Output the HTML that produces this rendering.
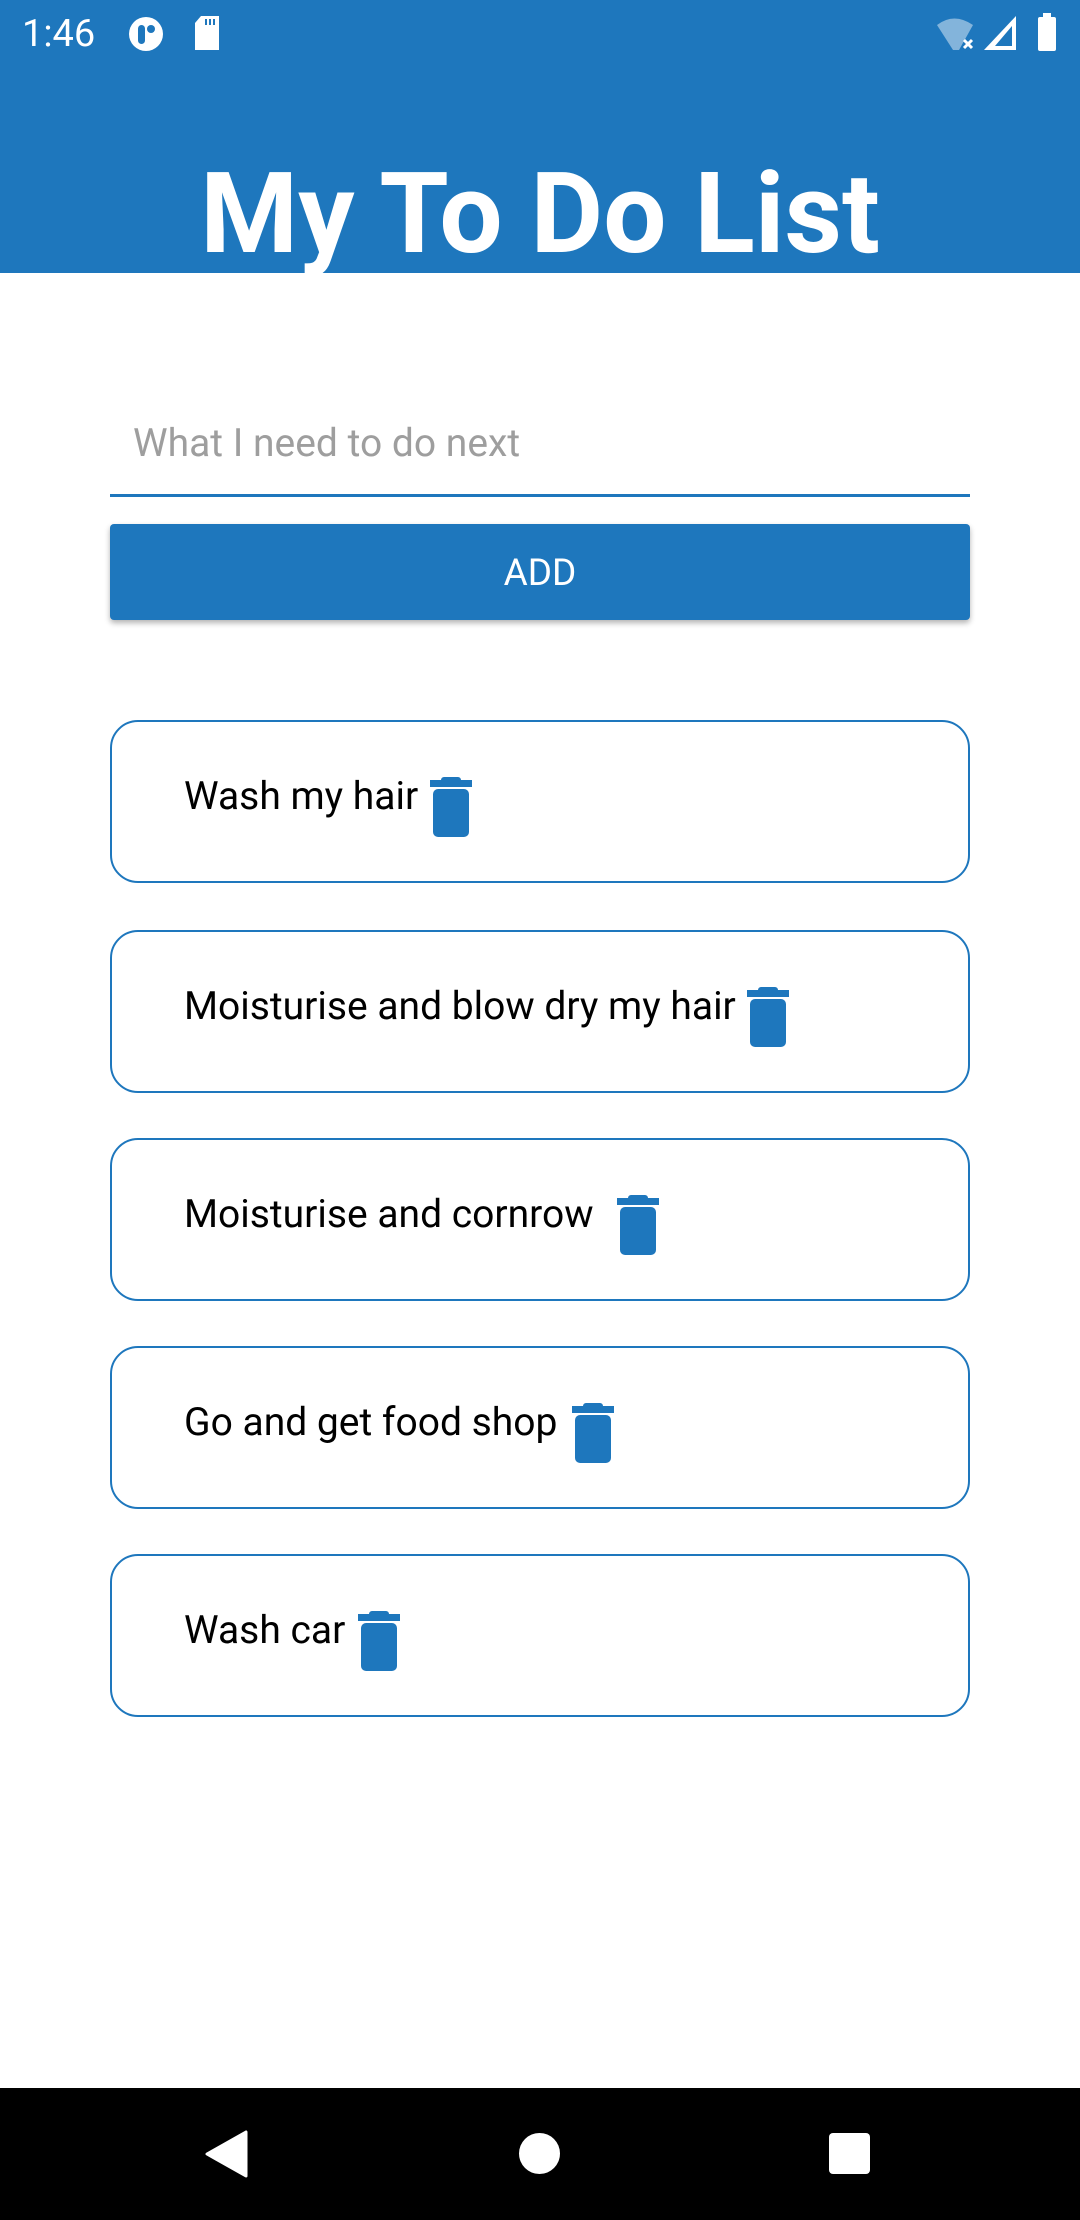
<!DOCTYPE html>
<html><head><meta charset="utf-8"><style>
*{margin:0;padding:0;box-sizing:border-box}
body{width:1080px;height:2220px;position:relative;background:#fff;font-family:"Roboto","Liberation Sans",sans-serif;overflow:hidden}
.hdr{position:absolute;left:0;top:0;width:1080px;height:273px;background:#1e77bd}
.time{position:absolute;left:22px;top:12px;color:#fff;font-size:38px}
.title{position:absolute;left:0;width:1080px;top:150px;text-align:center;color:#fff;font-weight:bold;font-size:112px;line-height:130px;white-space:nowrap}
.ph{position:absolute;left:133px;top:420px;font-size:39px;color:#9e9e9e}
.line{position:absolute;left:110px;top:494px;width:860px;height:3px;background:#1e77bd}
.btn{position:absolute;left:110px;top:524px;width:860px;height:96px;background:#1e77bd;border-radius:4px;box-shadow:0 3px 6px rgba(0,0,0,.3);color:#fff;font-size:37px;text-align:center;line-height:100px}
.card{position:absolute;left:110px;width:860px;height:163px;border:2.5px solid #1e77bd;border-radius:28px}
.card span{position:absolute;left:72px;top:51px;font-size:39px;color:#000;white-space:nowrap}
.card svg{position:absolute;top:55px}
.nav{position:absolute;left:0;top:2088px;width:1080px;height:132px;background:#000}
</style></head><body>
<div class="hdr">
<div class="time">1:46</div>
<svg style="position:absolute;left:126px;top:14px" width="40" height="40" viewBox="0 0 40 40"><circle cx="20" cy="20" r="17" fill="#fff"/><rect x="12" y="11" width="7" height="19" rx="3.5" fill="#1e77bd"/><circle cx="25" cy="15" r="4" fill="#1e77bd"/></svg>
<svg style="position:absolute;left:192px;top:14px" width="30" height="38" viewBox="0 0 30 38"><path d="M9 2h18v34H3V9z" fill="#fff"/><rect x="13" y="5" width="2" height="6" fill="#1e77bd"/><rect x="17" y="5" width="2" height="6" fill="#1e77bd"/><rect x="21" y="5" width="2" height="6" fill="#1e77bd"/></svg>
<svg style="position:absolute;left:935px;top:16px" width="42" height="36" viewBox="0 0 42 36"><path d="M2 9Q19-4 38 9L24 34H18z" fill="#fff" opacity=".45"/><path d="M29 24l8 8M37 24l-8 8" stroke="#fff" stroke-width="3"/></svg>
<svg style="position:absolute;left:982px;top:14px" width="36" height="38" viewBox="0 0 36 38"><path d="M34 2V36H2z" fill="#fff"/><path d="M30 12V32H13z" fill="#1e77bd"/></svg>
<svg style="position:absolute;left:1036px;top:12px" width="22" height="40" viewBox="0 0 22 40"><rect x="7" y="1" width="8" height="5" fill="#fff"/><rect x="2" y="5" width="18" height="34" rx="2" fill="#fff"/></svg>
<div class="title">My To Do List</div>
</div>
<div class="ph">What I need to do next</div>
<div class="line"></div>
<div class="btn">ADD</div>

<div class="card" style="top:720px"><span>Wash my hair</span><svg style="left:318px" width="42" height="60" viewBox="0 0 42 60"><rect x="11" y="0" width="20" height="6" rx="3" fill="#1e77bd"/><rect x="0" y="3" width="42" height="7" fill="#1e77bd"/><rect x="3" y="12" width="36" height="48" rx="5" fill="#1e77bd"/></svg></div>
<div class="card" style="top:930px"><span>Moisturise and blow dry my hair</span><svg style="left:635px" width="42" height="60" viewBox="0 0 42 60"><rect x="11" y="0" width="20" height="6" rx="3" fill="#1e77bd"/><rect x="0" y="3" width="42" height="7" fill="#1e77bd"/><rect x="3" y="12" width="36" height="48" rx="5" fill="#1e77bd"/></svg></div>
<div class="card" style="top:1138px"><span>Moisturise and cornrow</span><svg style="left:505px" width="42" height="60" viewBox="0 0 42 60"><rect x="11" y="0" width="20" height="6" rx="3" fill="#1e77bd"/><rect x="0" y="3" width="42" height="7" fill="#1e77bd"/><rect x="3" y="12" width="36" height="48" rx="5" fill="#1e77bd"/></svg></div>
<div class="card" style="top:1346px"><span>Go and get food shop</span><svg style="left:460px" width="42" height="60" viewBox="0 0 42 60"><rect x="11" y="0" width="20" height="6" rx="3" fill="#1e77bd"/><rect x="0" y="3" width="42" height="7" fill="#1e77bd"/><rect x="3" y="12" width="36" height="48" rx="5" fill="#1e77bd"/></svg></div>
<div class="card" style="top:1554px"><span>Wash car</span><svg style="left:246px" width="42" height="60" viewBox="0 0 42 60"><rect x="11" y="0" width="20" height="6" rx="3" fill="#1e77bd"/><rect x="0" y="3" width="42" height="7" fill="#1e77bd"/><rect x="3" y="12" width="36" height="48" rx="5" fill="#1e77bd"/></svg></div>

<div class="nav">
<svg style="position:absolute;left:204px;top:42px" width="44" height="48" viewBox="0 0 44 48"><path d="M42 2V46L3 24z" fill="#fff" stroke="#fff" stroke-width="3" stroke-linejoin="round"/></svg>
<div style="position:absolute;left:519px;top:45px;width:41px;height:41px;border-radius:50%;background:#fff"></div>
<div style="position:absolute;left:829px;top:45px;width:41px;height:41px;border-radius:4px;background:#fff"></div>
</div>
</body></html>
